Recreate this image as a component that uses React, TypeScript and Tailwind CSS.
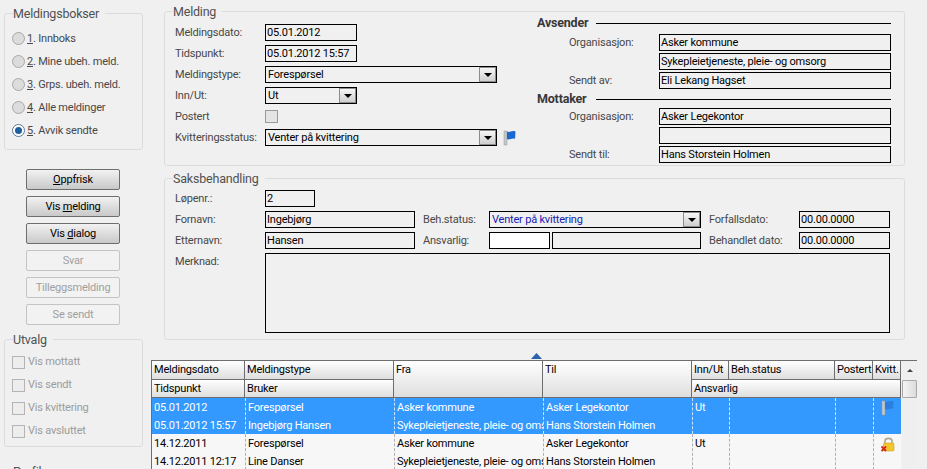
import type { ReactNode } from "react";

const GroupBox = ({ title, className, children }: { title: string; className?: string; children: ReactNode }) => (
  <fieldset className={`shrink-0 border border-[#dcdcdc] rounded-[3px] ${className ?? ""}`}>
    <legend className="ml-[8px] pr-[6px] h-[13px] leading-[14px] text-[12.5px] text-[#505050]">{title}</legend>
    {children}
  </fieldset>
);

const ComboArrow = () => (
  <span className="w-[17px] h-[15px] ml-auto flex items-center justify-center border border-[#8c8c8c] bg-gradient-to-b from-[#f6f6f6] to-[#cfcfcf]">
    <span className="w-0 h-0 border-x-[4px] border-x-transparent border-t-[4px] border-t-black" />
  </span>
);

const Field = ({ value, className, white }: { value?: string; className?: string; white?: boolean }) => (
  <div
    className={`h-[17px] border border-black leading-[15px] pl-[1px] text-[11px] text-black whitespace-nowrap overflow-hidden ${white ? "bg-white" : "bg-[#f0f0f0]"} ${className ?? ""}`}
  >
    {value}
  </div>
);

const Combo = ({ value, className, blue }: { value: string; className?: string; blue?: boolean }) => (
  <div className={`h-[17px] border border-black bg-[#f0f0f0] flex pl-[2px] leading-[15px] text-[11px] ${blue ? "text-[#1a1ab0]" : "text-black"} ${className ?? ""}`}>
    {value}
    <ComboArrow />
  </div>
);

const Label = ({ children, className }: { children: ReactNode; className?: string }) => (
  <span className={`text-[11px] leading-[17px] text-[#484848] whitespace-nowrap ${className ?? ""}`}>{children}</span>
);

const Flag = ({ faint }: { faint?: boolean }) => (
  <svg width="13" height="16" viewBox="0 0 13 16">
    <rect x="1" y="1" width="3" height="14" fill="#c4c8cc" stroke="#8f969c" strokeWidth="0.5" />
    <path d="M4 1.5 C6 3 9 0 12.5 1.5 L12 9 C9 7.5 6.5 10.5 4 9 Z" fill={faint ? "#2a7fe0" : "#1b68cf"} />
  </svg>
);

const Lock = () => (
  <svg width="14" height="16" viewBox="0 0 14 16">
    <path d="M4 8 V5 C4 1.5 11 1.5 11 5 V8" fill="none" stroke="#b0a890" strokeWidth="1.6" />
    <rect x="2.5" y="7" width="10.5" height="8" rx="1" fill="#f3c52e" stroke="#c49a18" strokeWidth="0.5" />
    <path d="M0.5 10.5 L5 15 M5 10.5 L0.5 15" stroke="#d0261c" strokeWidth="1.8" />
  </svg>
);

const radios = [
  { key: "1", rest: ". Innboks" },
  { key: "2", rest: ". Mine ubeh. meld." },
  { key: "3", rest: ". Grps. ubeh. meld." },
  { key: "4", rest: ". Alle meldinger" },
  { key: "5", rest: ". Avvik sendte", on: true },
];

const buttons = [
  { pre: "", key: "O", post: "ppfrisk" },
  { pre: "Vis ", key: "m", post: "elding" },
  { pre: "Vis ", key: "d", post: "ialog" },
  { pre: "Svar", off: true },
  { pre: "Tilleggsmelding", off: true },
  { pre: "Se sendt", off: true },
];

const filters = ["Vis mottatt", "Vis sendt", "Vis kvittering", "Vis avsluttet"];

const cols = "grid-cols-[93px_149px_149px_149px_37px_106px_38px_28px]";

const records = [
  {
    selected: true,
    cells: [
      ["05.01.2012", "05.01.2012 15:57"],
      ["Forespørsel", "Ingebjørg Hansen"],
      ["Asker kommune", "Sykepleietjeneste, pleie- og omsorg"],
      ["Asker Legekontor", "Hans Storstein Holmen"],
      ["Ut", ""],
      ["", ""],
      ["", ""],
    ],
    icon: <Flag faint />,
  },
  {
    cells: [
      ["14.12.2011", "14.12.2011 12:17"],
      ["Forespørsel", "Line Danser"],
      ["Asker kommune", "Sykepleietjeneste, pleie- og omsorg"],
      ["Asker Legekontor", "Hans Storstein Holmen"],
      ["Ut", ""],
      ["", ""],
      ["", ""],
    ],
    icon: <Lock />,
  },
];

const headCell = "bg-gradient-to-b from-white to-[#dedede] border-r border-b border-[#6e6e6e] pl-[2px] text-[11px] leading-[18px] text-black whitespace-nowrap overflow-hidden";

const App = () => {
  return (
    <div className="w-[927px] h-[469px] overflow-hidden bg-[#f0f0f0] flex font-['Roboto',sans-serif] tracking-[-0.2px]">
      <div className="w-[139px] ml-[4px] mr-[8px] shrink-0 flex flex-col">
        <GroupBox title="Meldingsbokser" className="h-[143px] mt-[7px] w-[139px]">
          <div className="flex flex-col pl-[7px] pt-[10px] gap-[7px]">
            {radios.map((r) => (
              <div key={r.key} className="h-[16px] flex items-center gap-[2px]">
                <span className={`w-[13px] h-[13px] rounded-full border flex items-center justify-center ${r.on ? "border-[#5a7a9a] bg-white" : "border-[#a8a8a8] bg-[#dcdcdc]"}`}>
                  {r.on && <span className="w-[7px] h-[7px] rounded-full bg-[#1f5f9f]" />}
                </span>
                <Label>
                  <u>{r.key}</u>
                  {r.rest}
                </Label>
              </div>
            ))}
          </div>
        </GroupBox>
        <div className="flex flex-col shrink-0 gap-[6px] mt-[19px] ml-[22px] w-[94px]">
          {buttons.map((b) => (
            <div
              key={b.pre + b.post}
              className={`h-[21px] rounded-[2px] border text-center text-[11px] leading-[19px] ${b.off ? "border-[#c4c4c4] text-[#a0a0a0] bg-[#f2f2f2]" : "border-[#6e6e6e] text-black bg-gradient-to-b from-[#f2f2f2] to-[#c9c9c9]"}`}
            >
              {b.pre}
              {b.key && <u>{b.key}</u>}
              {b.post}
            </div>
          ))}
        </div>
        <GroupBox title="Utvalg" className="h-[114px] mt-[8px] w-[139px]">
          <div className="flex flex-col pl-[7px] pt-[8px] gap-[7px]">
            {filters.map((f) => (
              <div key={f} className="h-[16px] flex items-center gap-[3px]">
                <span className="w-[13px] h-[13px] border border-[#b4b4b4] bg-[#ededed]" />
                <span className="text-[11px] text-[#9c9c9c]">{f}</span>
              </div>
            ))}
          </div>
        </GroupBox>
        <GroupBox title="Profil" className="h-[60px] mt-[18px] w-[139px]">
          <div />
        </GroupBox>
      </div>

      <div className="w-[766px] shrink-0 flex flex-col">
        <GroupBox title="Melding" className="ml-[13px] w-[741px] h-[161px] mt-[5px]">
          <div className="flex">
            <div className="w-[372px] pl-[10px] pt-[6px] grid grid-cols-[90px_1fr] gap-y-[4px] auto-rows-[17px] shrink-0">
              <Label>Meldingsdato:</Label>
              <Field value="05.01.2012" className="w-[92px]" />
              <Label>Tidspunkt:</Label>
              <Field value="05.01.2012 15:57" className="w-[92px]" />
              <Label>Meldingstype:</Label>
              <Combo value="Forespørsel" className="w-[232px]" />
              <Label>Inn/Ut:</Label>
              <Combo value="Ut" className="w-[92px]" />
              <Label>Postert</Label>
              <span className="w-[13px] h-[13px] my-auto border border-[#9a9a9a] bg-[#e4e4e4]" />
              <Label>Kvitteringsstatus:</Label>
              <div className="flex items-center gap-[6px]">
                <Combo value="Venter på kvittering" className="w-[232px]" />
                <Flag />
              </div>
            </div>
            <div className="w-[354px] flex flex-col text-[#404040]">
              <div className="flex items-center h-[14px] mt-[-2px]">
                <span className="text-[12.5px] font-bold text-[#383838] w-[59px]">Avsender</span>
                <span className="flex-1 h-px bg-black" />
              </div>
              <div className="grid grid-cols-[90px_1fr] gap-y-[2px] auto-rows-[17px] mt-[4px] pl-[32px]">
                <Label className="leading-[16px]">Organisasjon:</Label>
                <Field value="Asker kommune" />
                <span />
                <Field value="Sykepleietjeneste, pleie- og omsorg" />
                <Label>Sendt av:</Label>
                <Field value="Eli Lekang Hagset" />
              </div>
              <div className="flex items-center h-[14px] mt-[3px]">
                <span className="text-[12.5px] font-bold text-[#383838] w-[59px]">Mottaker</span>
                <span className="flex-1 h-px bg-black" />
              </div>
              <div className="grid grid-cols-[90px_1fr] gap-y-[2px] auto-rows-[17px] mt-[2px] pl-[32px]">
                <Label className="leading-[16px]">Organisasjon:</Label>
                <Field value="Asker Legekontor" />
                <span />
                <Field />
                <Label>Sendt til:</Label>
                <Field value="Hans Storstein Holmen" />
              </div>
            </div>
          </div>
        </GroupBox>

        <GroupBox title="Saksbehandling" className="ml-[13px] w-[741px] h-[168px] mt-[6px]">
          <div className="pl-[10px] pt-[5px] grid grid-cols-[90px_150px_74px_212px_98px_91px] gap-y-[4px] auto-rows-[17px]">
            <Label>Løpenr.:</Label>
            <Field value="2" className="w-[50px]" />
            <span className="col-span-4" />
            <Label>Fornavn:</Label>
            <Field value="Ingebjørg" />
            <Label className="pl-[8px]">Beh.status:</Label>
            <Combo value="Venter på kvittering" blue />
            <Label className="pl-[8px]">Forfallsdato:</Label>
            <Field value="00.00.0000" />
            <Label>Etternavn:</Label>
            <Field value="Hansen" />
            <Label className="pl-[8px]">Ansvarlig:</Label>
            <div className="flex gap-[2px]">
              <Field white className="w-[61px]" />
              <Field className="flex-1" />
            </div>
            <Label className="pl-[8px]">Behandlet dato:</Label>
            <Field value="00.00.0000" />
            <Label>Merknad:</Label>
            <div className="col-span-5 h-[80px] border border-black" />
          </div>
        </GroupBox>

        <div className="h-[20px] shrink-0 flex items-end justify-center">
          <svg width="11" height="6" viewBox="0 0 11 6" className="mb-[1px] mr-[-4px]">
            <path d="M5.5 0 L11 6 H0 Z" fill="#2a62b0" />
          </svg>
        </div>

        <div className="flex w-[766px] flex-1 min-h-0 border-t border-l border-[#6e6e6e]">
          <div className="w-[749px] shrink-0">
            <div className={`grid ${cols} grid-rows-[19px_18px]`}>
              <div className={headCell}>Meldingsdato</div>
              <div className={headCell}>Meldingstype</div>
              <div className={`${headCell} row-span-2`}>Fra</div>
              <div className={`${headCell} row-span-2`}>Til</div>
              <div className={headCell}>Inn/Ut</div>
              <div className={headCell}>Beh.status</div>
              <div className={headCell}>Postert</div>
              <div className={headCell}>Kvitt.</div>
              <div className={headCell}>Tidspunkt</div>
              <div className={headCell}>Bruker</div>
              <div className={`${headCell} col-span-4`}>Ansvarlig</div>
            </div>
            {records.map((rec, i) => (
              <div key={i} className={`grid ${cols} h-[36px] ${rec.selected ? "bg-[#3399ff] text-white" : "bg-[#f7f7f7] text-black"}`}>
                {rec.cells.map((cell, c) => (
                  <div key={c} className={`pl-[2px] pt-[1px] text-[11px] leading-[18px] whitespace-nowrap overflow-hidden ${c > 0 ? (rec.selected ? "border-l border-dashed border-[#cfe6ff]" : "border-l border-dashed border-[#b0b0b0]") : ""}`}>
                    <div className="h-[18px]">{cell[0]}</div>
                    <div className="h-[17px]">{cell[1]}</div>
                  </div>
                ))}
                <div className={`flex justify-center pt-[2px] border-l border-dashed ${rec.selected ? "border-[#cfe6ff]" : "border-[#b0b0b0]"}`}>
                  <div className="h-[16px]">{rec.icon}</div>
                </div>
              </div>
            ))}
          </div>
          <div className="w-[16px] ml-[1px] bg-[#efefef] flex flex-col items-center">
            <div className="h-[19px] flex items-center">
              <span className="w-0 h-0 border-x-[3px] border-x-transparent border-b-[3px] border-b-[#404040]" />
            </div>
            <div className="w-[15px] h-[18px] border border-[#a8a8a8] rounded-[1px] bg-gradient-to-r from-[#f4f4f4] to-[#dcdcdc]" />
          </div>
        </div>
      </div>
    </div>
  );
};

export default App;
